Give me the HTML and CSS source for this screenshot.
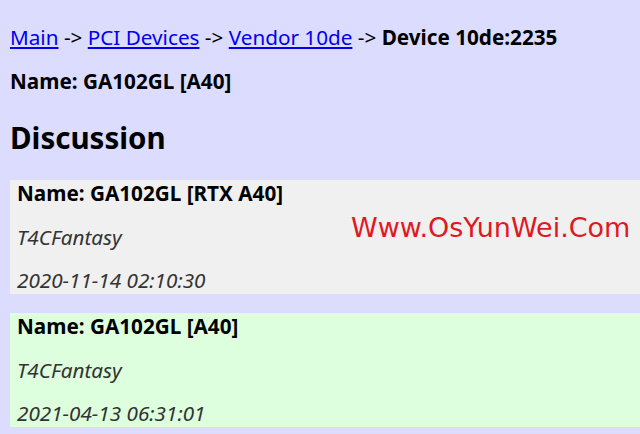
FILE: index.html
```html
<!DOCTYPE html>
<html lang="en">
<head>
  <meta charset="UTF-8">
  <title>Device 10de:2235</title>
  <link rel="stylesheet" href="styles.css">
</head>
<body>
  <div class="crumbs">
    <a href="#">Main</a> -&gt; <a href="#">PCI Devices</a> -&gt; <a href="#">Vendor 10de</a> -&gt; <b>Device 10de:2235</b>
  </div>
  <div class="dev-name">Name: GA102GL [A40]</div>

  <h2>Discussion</h2>

  <div class="entry">
    <div class="entry-name">Name: GA102GL [RTX A40]</div>
    <div class="entry-meta">T4CFantasy</div>
    <div class="entry-meta">2020-11-14 02:10:30</div>
  </div>

  <div class="entry approved">
    <div class="entry-name">Name: GA102GL [A40]</div>
    <div class="entry-meta">T4CFantasy</div>
    <div class="entry-meta">2021-04-13 06:31:01</div>
  </div>

  <!-- site watermark -->
  <div class="watermark">Www.OsYunWei.Com</div>
</body>
</html>
```

FILE: styles.css
```css
body {
  margin: 0 0 0 10px;
  padding-top: 24px;
  background-color: #dcdcff;
  font-family: "Noto Sans", "Open Sans", sans-serif;
  font-size: 20.7px;
  line-height: 27px;
  color: #000;
  position: relative;
}

a {
  color: #0000ee;
}

.crumbs b,
.dev-name {
  font-weight: bold;
}

.dev-name {
  margin-top: 17px;
}

h2 {
  font-size: 29.5px;
  line-height: 40px;
  margin: 23px 0 22px 0;
}

.entry {
  background-color: #f0f0f0;
  padding: 0 7px;
  display: grid;
  row-gap: 16.5px;
  margin-bottom: 19px;
}

.entry.approved {
  background-color: #ddffdd;
}

.entry-name {
  font-weight: bold;
}

.entry-meta {
  font-style: italic;
  color: #333;
}

.watermark {
  position: absolute;
  left: 341px;
  top: 211px;
  font-family: "DejaVu Sans", Verdana, sans-serif;
  font-size: 27px;
  line-height: 34px;
  color: #e0191e;
}
```
